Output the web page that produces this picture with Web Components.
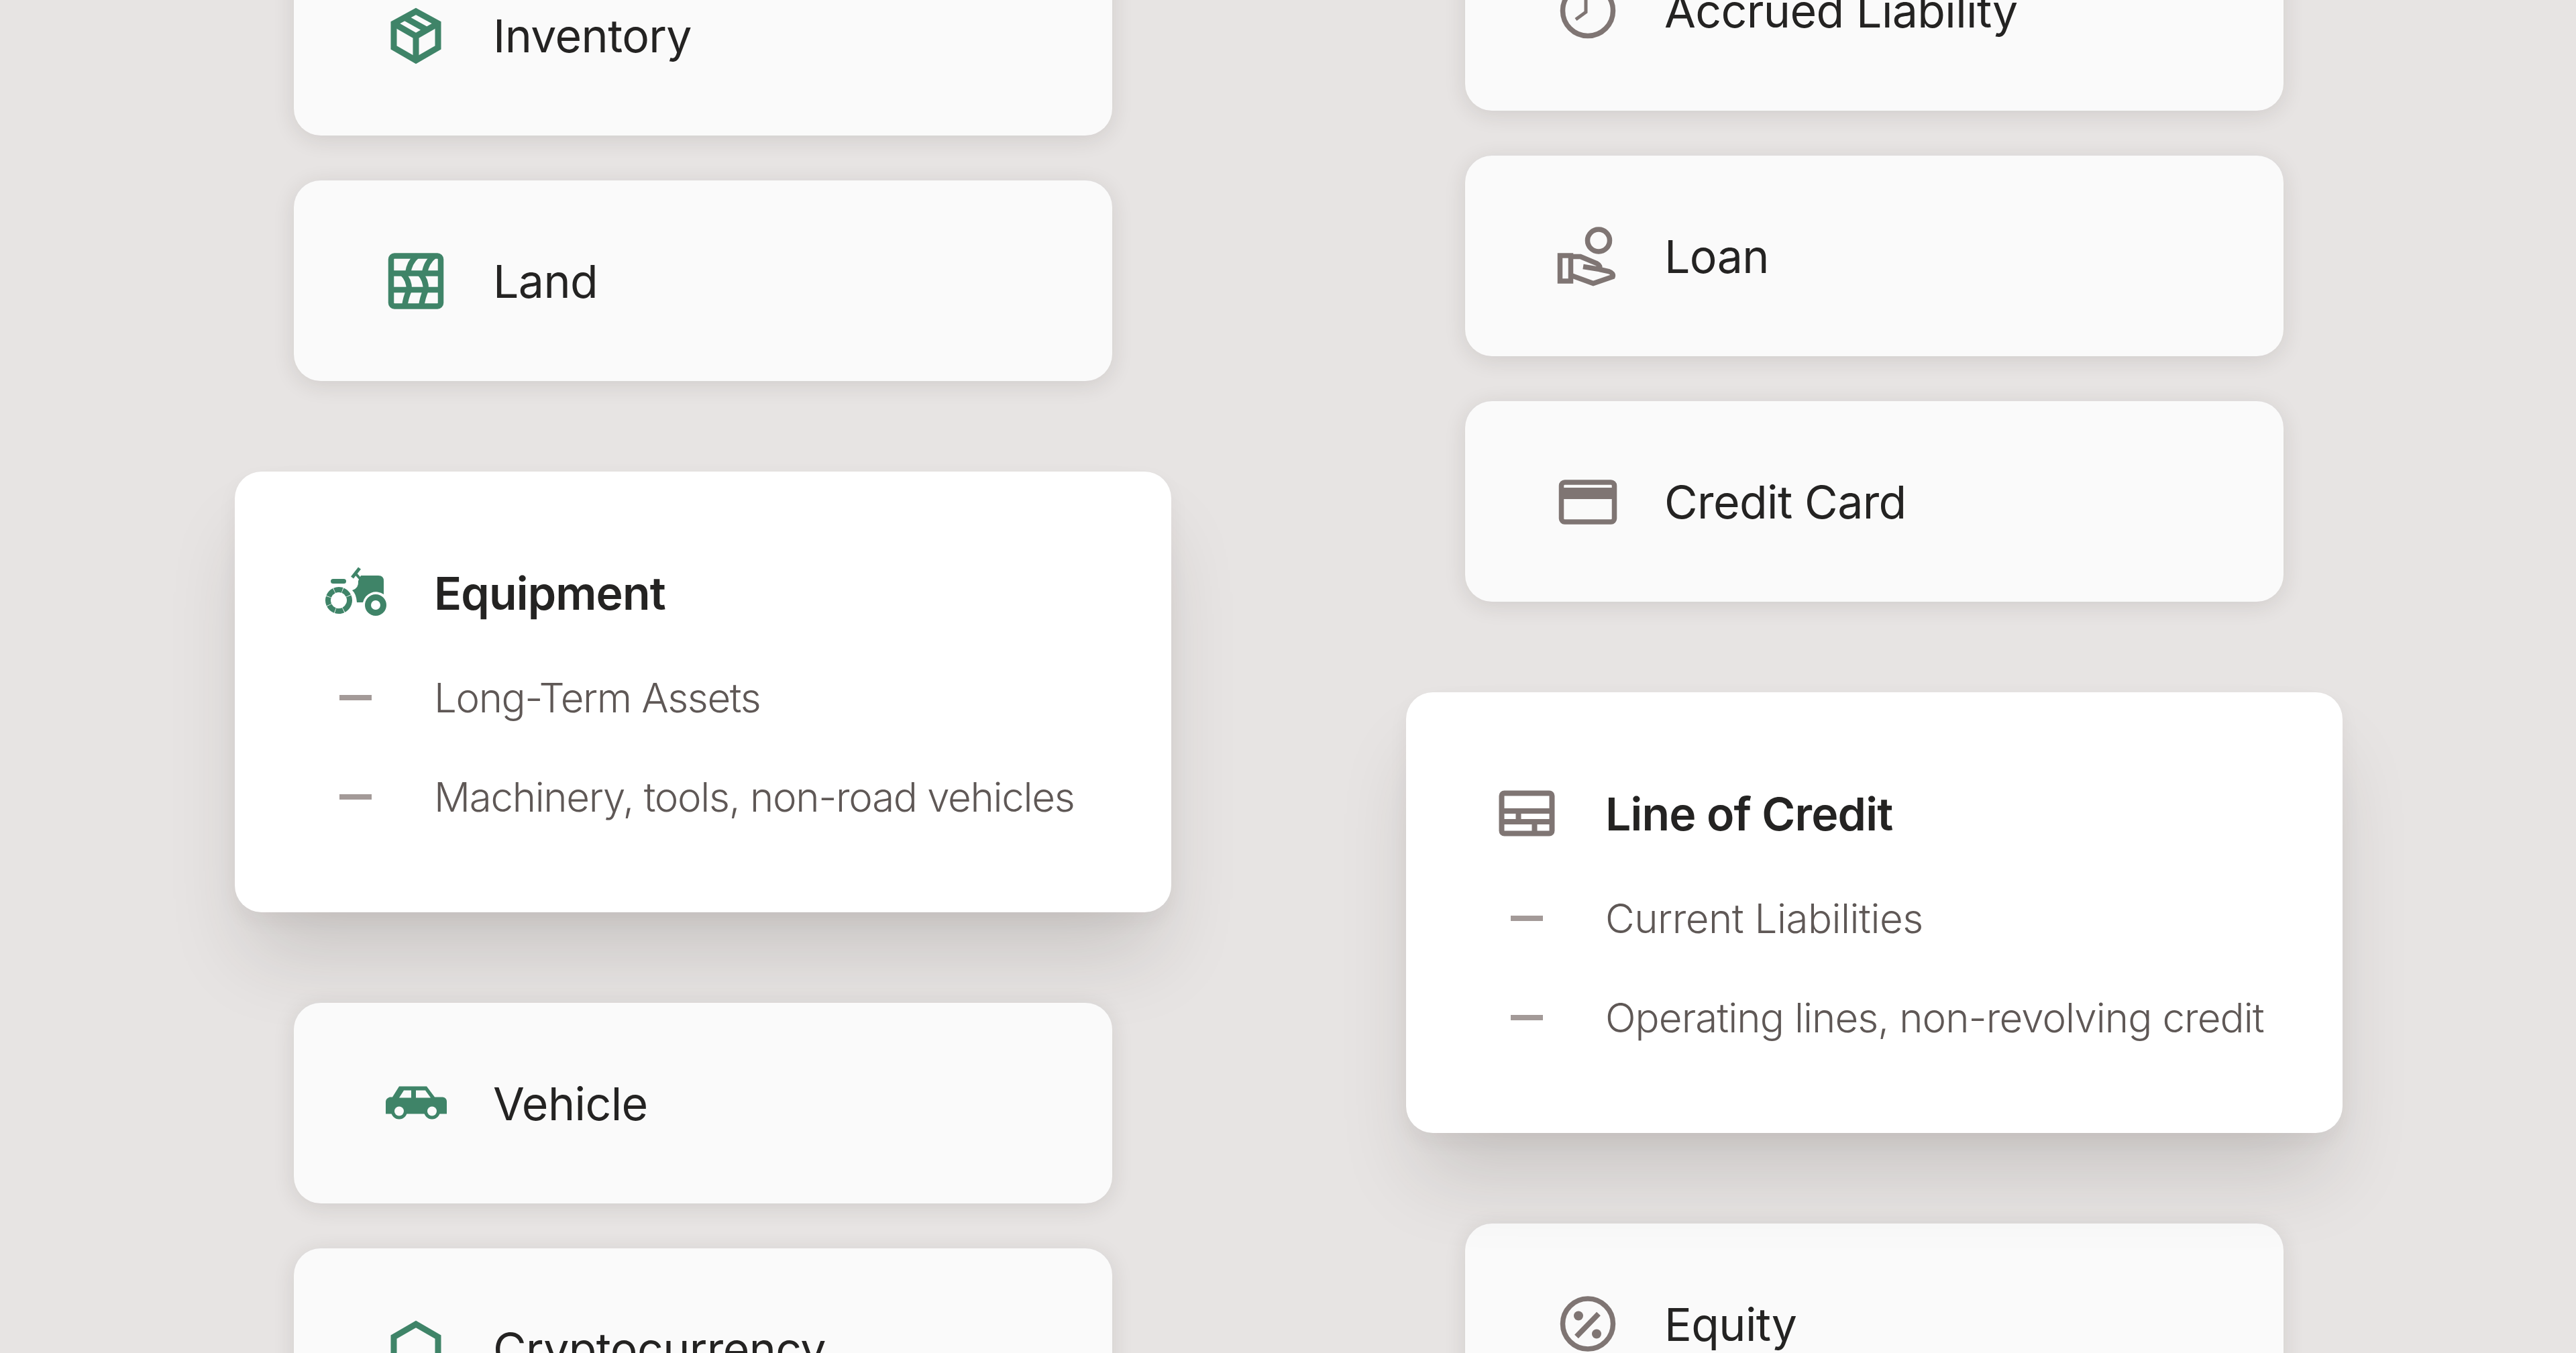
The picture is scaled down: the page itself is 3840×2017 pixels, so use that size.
<!DOCTYPE html>
<html lang="en">
<head>
<meta charset="utf-8">
<title>Ledger accounts</title>
<style>
  html, body { margin: 0; background: #e7e4e3; }
  body { font-family: "Inter", "Liberation Sans", sans-serif; }
</style>
</head>
<body>
<ledger-board>
  <ledger-column style="--lift: -97px">
    <ledger-item><ledger-icon name="box" tone="green"></ledger-icon>Inventory</ledger-item>
    <ledger-item><ledger-icon name="land" tone="green"></ledger-icon>Land</ledger-item>
    <ledger-detail>
      <ledger-icon slot="icon" name="tractor" tone="green"></ledger-icon>
      <span slot="title">Equipment</span>
      <ledger-note style="--track: -1.4px">Long-Term Assets</ledger-note>
      <ledger-note style="--track: -1.3px">Machinery, tools, non-road vehicles</ledger-note>
    </ledger-detail>
    <ledger-item on-top><ledger-icon name="car" tone="green"></ledger-icon>Vehicle</ledger-item>
    <ledger-item on-top><ledger-icon name="hex" tone="green"></ledger-icon>Cryptocurrency</ledger-item>
  </ledger-column>
  <ledger-column style="--lift: -134px">
    <ledger-item><ledger-icon name="clock" tone="grey"></ledger-icon>Accrued Liability</ledger-item>
    <ledger-item><ledger-icon name="loan" tone="grey"></ledger-icon>Loan</ledger-item>
    <ledger-item><ledger-icon name="card" tone="grey"></ledger-icon>Credit Card</ledger-item>
    <ledger-detail>
      <ledger-icon slot="icon" name="credit-line" tone="grey"></ledger-icon>
      <span slot="title">Line of Credit</span>
      <ledger-note style="--track: -0.5px">Current Liabilities</ledger-note>
      <ledger-note style="--track: -0.93px">Operating lines, non-revolving credit</ledger-note>
    </ledger-detail>
    <ledger-item><ledger-icon name="percent" tone="grey"></ledger-icon>Equity</ledger-item>
  </ledger-column>
</ledger-board>

<script>
// each icon is drawn on a 96 box, some use the crop coordinates as viewBox origin
const ICONS = {
  box: `<svg viewBox="0 0 96 96"><g class="s" stroke-width="9" stroke-linejoin="miter">
    <path d="M48 12 81 30V66L48 85 15 66V30Z"/><path d="M15 30 48 49 81 30M48 49V85M31 21 65 40"/></g></svg>`,
  land: `<svg viewBox="0 0 96 96"><g class="s" stroke-width="8.5">
    <rect x="11" y="10.5" width="74" height="75" rx="5"/><path d="M11 36.5H85M11 61H85"/>
    <path d="M50 10Q38 20 36 36.5M28 36.5Q38 46 38 61Q33 72 31 86M76 10Q63 20 61 36.5M54 36.5Q63 46 63 61Q58 72 56 86"/></g></svg>`,
  tractor: `<svg viewBox="12 6 96 96"><circle class="s" cx="35" cy="65" r="16" stroke-width="8" stroke-dasharray="11.77 .8" transform="rotate(20 35 65)"/>
    <circle class="s" cx="90" cy="72" r="11.5" stroke-width="9"/>
    <rect class="f" x="23" y="33" width="23" height="7" rx="3.5"/>
    <path class="f" d="M68 28H94Q102 28 102 36V56A20 20 0 0 0 71 68H62Q61 55 55 50Q65 47 64 36Z"/>
    <path class="s" stroke-width="5" d="M55 31 66 17"/><path class="s" stroke-width="4" d="M60 25 67 33"/></svg>`,
  car: `<svg viewBox="12 -3.5 96 96"><path class="f" d="M35 19H76L88 35H100Q106 36 106 42V60H15V42Q15 37 21 35H25Z"/>
    <circle class="f" cx="35" cy="56" r="12"/><circle class="f" cx="84" cy="56" r="12"/>
    <circle fill="#fafafa" cx="35" cy="56" r="7"/><circle fill="#fafafa" cx="84" cy="56" r="7"/>
    <path fill="#fafafa" d="M35 36 42 25H53V36ZM60 25H74L82 36H60Z"/></svg>`,
  hex: `<svg viewBox="0 0 96 96"><path class="s" stroke-width="9" d="M48 11 81 30V66L48 85 15 66V30Z"/></svg>`,
  clock: `<svg viewBox="0 0 96 96"><circle class="s" cx="49" cy="48" r="37.5" stroke-width="7.5"/>
    <path class="s" stroke-width="5" d="M46 22V50L31 61"/></svg>`,
  loan: `<svg viewBox="18 13.5 96 96"><g class="s" stroke-width="7.5"><circle cx="83" cy="38" r="16.5"/>
    <rect x="25.5" y="60.5" width="16" height="38"/>
    <path d="M42 62H56L80 72Q87 76 84 81L60 77M84 81 98 84Q106 87 104 92L75 102 42 90"/></g></svg>`,
  card: `<svg viewBox="0 0 96 96"><rect class="s" x="9.5" y="19" width="79" height="59" rx="5" stroke-width="7.5"/>
    <rect class="f" x="9" y="27" width="80" height="17"/></svg>`,
  "credit-line": `<svg viewBox="0 0 96 96"><g class="s" stroke-width="8"><rect x="10.5" y="17.5" width="75" height="60" rx="4"/>
    <path d="M10 44H86M10 60H86M35.5 44V60M59.5 60V78"/></g></svg>`,
  percent: `<svg viewBox="18 13.5 96 96"><circle class="s" cx="67" cy="61" r="37.5" stroke-width="7.5"/>
    <circle class="f" cx="53" cy="49" r="7"/><circle class="f" cx="80" cy="76" r="7"/>
    <path class="s" stroke-width="8" d="M83 46 50 80" stroke-linecap="butt"/></svg>`
};

class LedgerIcon extends HTMLElement {
  connectedCallback() {
    const tone = this.getAttribute('tone') === 'green' ? '#3f8468' : '#7f7573';
    this.attachShadow({ mode: 'open' });
    this.shadowRoot.innerHTML = `
      <style>
        :host { display: block; flex: none; width: 96px; height: 96px; }
        svg { display: block; width: 96px; height: 96px; overflow: visible; }
        .s, .s * { fill: none; stroke: ${tone}; }
        .f { fill: ${tone}; }
      </style>
      ${ICONS[this.getAttribute('name')]}
    `;
  }
}

class LedgerBoard extends HTMLElement {
  connectedCallback() {
    this.attachShadow({ mode: 'open' });
    this.shadowRoot.innerHTML = `
      <style>
        :host { display: flex; gap: 350px; padding-left: 350px; height: 2017px; overflow: hidden; }
      </style>
      <slot></slot>
    `;
  }
}

class LedgerColumn extends HTMLElement {
  connectedCallback() {
    this.attachShadow({ mode: 'open' });
    this.shadowRoot.innerHTML = `
      <style>
        :host { display: flex; flex-direction: column; align-items: center; gap: 67px; width: 1396px; margin-top: var(--lift); flex: none; }
      </style>
      <slot></slot>
    `;
  }
}

class LedgerItem extends HTMLElement {
  connectedCallback() {
    this.attachShadow({ mode: 'open' });
    this.shadowRoot.innerHTML = `
      <style>
        :host {
          display: flex; align-items: center; gap: 67px; flex: none;
          box-sizing: border-box; width: 1220px; height: 299px; padding: 0 134px;
          background: #fafafa; border-radius: 40px;
          box-shadow: 0 6px 32px rgba(50, 40, 35, 0.12);
          color: #242322; font-size: 68px; letter-spacing: -0.6px; white-space: nowrap;
        }
        :host([on-top]) { position: relative; z-index: 2; }
      </style>
      <slot></slot>
    `;
  }
}

class LedgerDetail extends HTMLElement {
  connectedCallback() {
    this.attachShadow({ mode: 'open' });
    this.shadowRoot.innerHTML = `
      <style>
        :host {
          display: flex; flex-direction: column; gap: 64px; flex: none;
          box-sizing: border-box; width: 1396px; height: 657px; margin: 68px 0; padding: 131px 60px 130px 132px;
          background: #fff; border-radius: 40px; position: relative; z-index: 1;
          box-shadow: 0 12px 30px rgba(50, 40, 35, 0.05), 0 80px 120px -24px rgba(50, 40, 35, 0.17);
        }
        .title {
          display: flex; align-items: center; gap: 69px; height: 100px;
          color: #242322; font-size: 68px; font-weight: 600; letter-spacing: -0.85px; white-space: nowrap;
        }
      </style>
      <div class="title"><slot name="icon"></slot><slot name="title"></slot></div>
      <slot></slot>
    `;
  }
}

class LedgerNote extends HTMLElement {
  connectedCallback() {
    this.attachShadow({ mode: 'open' });
    this.shadowRoot.innerHTML = `
      <style>
        :host {
          display: flex; align-items: center; gap: 69px; height: 84px;
          color: #5f5856; font-size: 60px; font-weight: 300; letter-spacing: var(--track); white-space: nowrap;
        }
        .dash { width: 48px; height: 8px; margin: 0 24px; background: #a39a98; flex: none; }
      </style>
      <div class="dash"></div><slot></slot>
    `;
  }
}

customElements.define('ledger-icon', LedgerIcon);
customElements.define('ledger-board', LedgerBoard);
customElements.define('ledger-column', LedgerColumn);
customElements.define('ledger-item', LedgerItem);
customElements.define('ledger-detail', LedgerDetail);
customElements.define('ledger-note', LedgerNote);
</script>
</body>
</html>
